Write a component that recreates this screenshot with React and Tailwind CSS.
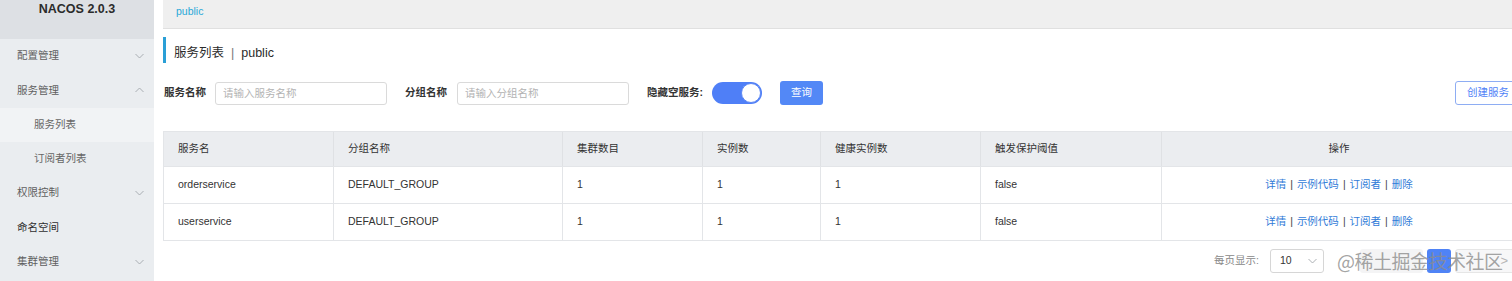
import React from "react";

function Chevron({ up }) {
  return (
    <svg width="9" height="6" viewBox="0 0 9 6" className="text-[#a3a7ab]">
      <polyline
        points={up ? "0.5,5 4.5,1 8.5,5" : "0.5,1 4.5,5 8.5,1"}
        fill="none"
        stroke="currentColor"
        strokeWidth="0.9"
      />
    </svg>
  );
}

const menu = [
  { label: "配置管理", chevron: "down" },
  { label: "服务管理", chevron: "up" },
  { label: "服务列表", sub: true, active: true },
  { label: "订阅者列表", sub: true },
  { label: "权限控制", chevron: "down" },
  { label: "命名空间", dark: true },
  { label: "集群管理", chevron: "down" },
];

const rows = [
  ["orderservice", "DEFAULT_GROUP", "1", "1", "1", "false"],
  ["userservice", "DEFAULT_GROUP", "1", "1", "1", "false"],
];

const headers = ["服务名", "分组名称", "集群数目", "实例数", "健康实例数", "触发保护阈值"];

function Ops() {
  return (
    <div className="flex items-center justify-center gap-[4px] text-[#2f7bd8]">
      <span>详情</span>
      <span className="text-[#444]">|</span>
      <span>示例代码</span>
      <span className="text-[#444]">|</span>
      <span>订阅者</span>
      <span className="text-[#444]">|</span>
      <span>删除</span>
    </div>
  );
}

export default function App() {
  return (
    <div className="relative w-[1512px] h-[281px] overflow-hidden bg-white flex font-['Liberation_Sans','Noto_Sans_CJK_SC',sans-serif] text-[10.5px] text-[#333]">
      <aside className="w-[154px] shrink-0 h-[281px] bg-[#eaedf0] flex flex-col">
        <div className="h-[39px] bg-[#dde0e4] text-center font-bold text-[12.5px] text-[#2b2b2b] leading-[16px] pt-[1px]">
          NACOS 2.0.3
        </div>
        {menu.map((m) => (
          <div
            key={m.label}
            className={
              "h-[34.3px] flex items-center justify-between pr-[10px] " +
              (m.sub ? "pl-[34px] " : "pl-[17px] ") +
              (m.active ? "bg-[#f1f3f5] " : "") +
              (m.dark ? "text-[#2f2f2f]" : m.sub ? "text-[#666]" : "text-[#5f5f5f]")
            }
          >
            <span>{m.label}</span>
            {m.chevron && <Chevron up={m.chevron === "up"} />}
          </div>
        ))}
      </aside>

      <main className="ml-[9px] w-[1354px] shrink-0 flex flex-col">
        <div className="h-[29px] shrink-0 bg-[#efefef] border-b border-[#e0e0e0] pl-[13px] pb-[4px] flex items-center text-[#29a8d8]">
          public
        </div>

        <div className="mt-[8px] h-[26px] border-l-[3px] border-[#2a9fd6] pl-[8px] pt-[7px] flex items-center text-[12.5px] text-[#2b2b2b]">
          服务列表<span className="mx-[7px] text-[#777]">|</span>public
        </div>

        <div className="mt-[18px] h-[24px] flex items-center">
          <span className="pl-[1px] font-bold text-[#333]">服务名称</span>
          <input
            placeholder="请输入服务名称"
            className="ml-[9px] w-[172px] h-[23px] border border-[#dadada] rounded-[3px] px-[7px] text-[10.5px] outline-none placeholder:text-[#b3b3b3]"
          />
          <span className="ml-[18px] font-bold text-[#333]">分组名称</span>
          <input
            placeholder="请输入分组名称"
            className="ml-[10px] w-[172px] h-[23px] border border-[#dadada] rounded-[3px] px-[7px] text-[10.5px] outline-none placeholder:text-[#b3b3b3]"
          />
          <span className="ml-[18px] font-bold text-[#333]">隐藏空服务:</span>
          <div className="relative ml-[9px] w-[50px] h-[22px] rounded-full bg-[#4f7ff7]">
            <div className="absolute right-[1px] top-[1px] w-[20px] h-[20px] rounded-full bg-white border border-[#5d88f5]" />
          </div>
          <button className="ml-[18px] w-[43px] h-[24px] rounded-[3px] bg-[#5388f6] text-white text-[10.5px]">
            查询
          </button>
          <button className="ml-auto w-[62px] h-[24px] rounded-[3px] border border-[#8eadf3] text-[#4f7ff7] text-[10.5px] text-left pl-[11px]">
            创建服务
          </button>
        </div>

        <div className="mt-[26px] border border-[#e3e5e8]">
          <div className="grid grid-cols-[170px_229px_140px_118px_160px_181px_1fr] h-[34px] bg-[#ebedf0]">
            {headers.map((h) => (
              <div key={h} className="pl-[14px] flex items-center border-r border-[#dfe1e4] text-[#333]">
                {h}
              </div>
            ))}
            <div className="flex items-center justify-center text-[#333]">操作</div>
          </div>
          {rows.map((r) => (
            <div
              key={r[0]}
              className="grid grid-cols-[170px_229px_140px_118px_160px_181px_1fr] h-[37px] border-t border-[#e3e5e8]"
            >
              {r.map((c, i) => (
                <div key={i} className="pl-[14px] flex items-center border-r border-[#e3e5e8] text-[#333]">
                  {c}
                </div>
              ))}
              <div className="flex items-center justify-center">
                <Ops />
              </div>
            </div>
          ))}
        </div>

        <div className="mt-[8px] h-[24px] flex items-center justify-end">
          <span className="text-[#888]">每页显示:</span>
          <div className="ml-[11px] w-[54px] h-[24px] border border-[#d6d6d6] rounded-[3px] flex items-center justify-between pl-[9px] pr-[6px]">
            <span className="text-[#333]">10</span>
            <Chevron />
          </div>
          <div className="ml-[36px] w-[63px] h-[24px] rounded-[3px] bg-[#f4f4f5]" />
          <div className="ml-[4px] w-[24px] h-[24px] rounded-[3px] bg-[#4f83f6]" />
          <div className="ml-[4px] w-[62px] h-[24px] rounded-[3px] bg-[#f7f7f8] border border-[#e6e6e6] flex items-center justify-end pr-[8px] text-[#b5b5b5] text-[13px]">
            &gt;
          </div>
        </div>
      </main>

      <div className="absolute left-[1337px] top-[249px] text-[19px] leading-[24px] font-['Noto_Sans_CJK_SC',sans-serif] text-[#8c8c8c]/80 tracking-[-0.5px] whitespace-nowrap">
        @稀土掘金技术社区
      </div>
    </div>
  );
}
